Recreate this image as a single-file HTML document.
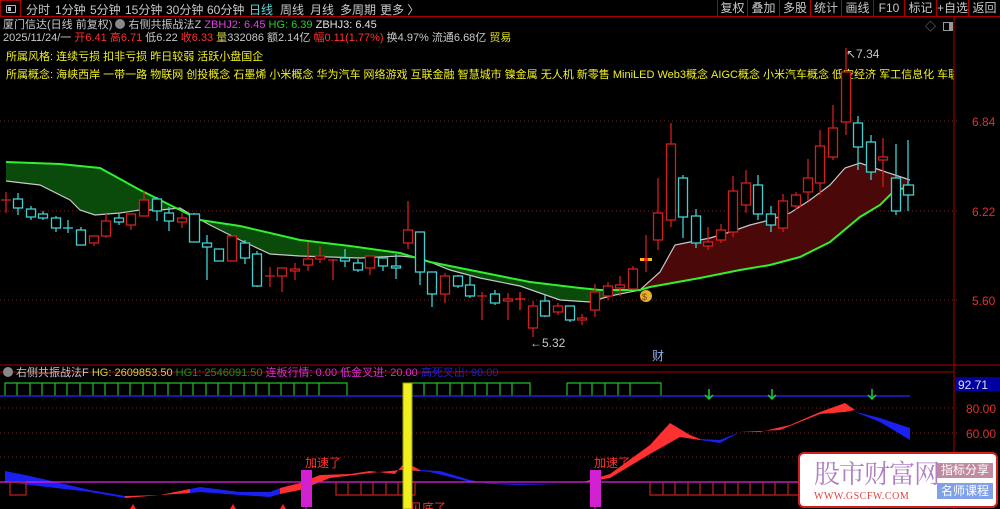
<!DOCTYPE html>
<html><head><meta charset="utf-8">
<style>
*{margin:0;padding:0;box-sizing:border-box}
body{width:1000px;height:509px;background:#000;overflow:hidden;position:relative;font-family:"Liberation Sans","Noto Sans CJK SC",sans-serif;font-size:11px;color:#c8c8c8}
.t{position:absolute;white-space:nowrap;line-height:14px}
.top{position:absolute;left:0;top:0;width:1000px;height:17px;border-bottom:1px solid #a00}
.top span{position:absolute;top:1px;font-size:12px;color:#c8c8c8}
.btn{position:absolute;top:0;height:17px;border-left:1px solid #a00;color:#c8c8c8;font-size:12px;text-align:center;line-height:16px}
</style></head><body>
<div class="top">
<div style="position:absolute;left:0;top:0;width:21px;height:17px;border:1px solid #a00"><div style="position:absolute;left:5px;top:4px;width:10px;height:8px;border:1px solid #bbb;border-radius:1px"><div style="position:absolute;left:1px;top:1px;width:3px;height:4px;background:#bbb"></div></div></div>
<span style="left:26px">分时</span><span style="left:55px">1分钟</span><span style="left:90px">5分钟</span><span style="left:125px">15分钟</span><span style="left:166px">30分钟</span><span style="left:207px">60分钟</span><span style="left:249px;color:#5fd7d7">日线</span><span style="left:280px">周线</span><span style="left:310px">月线</span><span style="left:340px">多周期</span><span style="left:380px">更多 〉</span>
<div class="btn" style="left:717px;width:30px">复权</div><div class="btn" style="left:747px;width:32px">叠加</div><div class="btn" style="left:779px;width:31px">多股</div><div class="btn" style="left:810px;width:31px">统计</div><div class="btn" style="left:841px;width:32px">画线</div><div class="btn" style="left:873px;width:31px">F10</div><div class="btn" style="left:904px;width:32px">标记</div><div class="btn" style="left:936px;width:32px">+自选</div><div class="btn" style="left:968px;width:32px">返回</div>
</div>
<div class="t" style="left:3px;top:18px;font-size:11px">厦门信达(日线 前复权) <span style="display:inline-block;width:10px;height:10px;border-radius:50%;background:#888;vertical-align:-1px"></span> 右侧共振战法Z <span style="color:#e040e0">ZBHJ2: 6.45</span> <span style="color:#20d020">HG: 6.39</span> <span style="color:#e0e0e0">ZBHJ3: 6.45</span></div>
<div class="t" style="left:3px;top:31px;font-size:11px">2025/11/24/一 <span style="color:#ff3030">开6.41 高6.71</span> 低6.22 <span style="color:#ff3030">收6.33</span> <span style="color:#c8c840">量</span>332086 额2.14亿 <span style="color:#ff3030">幅0.11(1.77%)</span> 换4.97% 流通6.68亿 <span style="color:#e0e020">贸易</span></div>
<div class="t" style="left:6px;top:50px;color:#f0f020;font-size:11px">所属风格: 连续亏损 扣非亏损 昨日较弱 活跃小盘国企</div>
<div class="t" style="left:6px;top:68px;color:#f0f020;font-size:11px;width:948px;overflow:hidden">所属概念: 海峡西岸 一带一路 物联网 创投概念 石墨烯 小米概念 华为汽车 网络游戏 互联金融 智慧城市 镍金属 无人机 新零售 MiniLED Web3概念 AIGC概念 小米汽车概念 低空经济 军工信息化 车联网 I</div>
<div class="t" style="left:925px;top:20px;color:#888;font-size:11px">◇</div>
<div style="position:absolute;left:943px;top:22px;width:10px;height:9px;border:1px solid #999"><div style="position:absolute;right:0;top:0;width:3px;height:7px;background:#999"></div></div>

<svg width="1000" height="509" style="position:absolute;left:0;top:0" xmlns="http://www.w3.org/2000/svg">
<line x1="954" y1="17" x2="954" y2="509" stroke="#b00000" stroke-width="1"/>
<g stroke="#802020" stroke-dasharray="1,3">
<line x1="0" y1="121" x2="960" y2="121"/><line x1="0" y1="211" x2="960" y2="211"/><line x1="0" y1="300" x2="960" y2="300"/>
<line x1="0" y1="408" x2="960" y2="408"/><line x1="0" y1="433" x2="960" y2="433"/><line x1="0" y1="457" x2="960" y2="457"/>
</g>
<g fill="#e03030" font-size="12" font-family="Liberation Sans">
<text x="972" y="126">6.84</text><text x="972" y="216">6.22</text><text x="972" y="305">5.60</text>
<text x="966" y="413">80.00</text><text x="966" y="438">60.00</text>
</g>
<rect x="955" y="377" width="45" height="14" fill="#0000a0"/><text x="958" y="389" fill="#e0e0e0" font-size="12" font-family="Liberation Sans">92.71</text>
<polygon fill="#0a4a0a" points="6,162 60,164 100,168 140,190 190,215 200,220 240,226 300,240 350,246 400,253 430,262 480,272 530,282 580,288 600,290 640,290 610,296 590,302 560,300 520,286 480,278 450,270 420,258 400,256 360,258 330,257 300,256 270,254 240,240 210,225 190,214 180,208 160,210 140,210 120,213 95,215 80,210 70,200 40,185 6,181"/>
<polygon fill="#4a0808" points="640,290 650,287 700,278 720,274 740,270 770,265 800,257 830,242 860,217 880,205 895,190 910,187 910,180 895,175 880,170 860,163 845,168 830,185 810,200 790,213 770,220 750,225 730,232 710,238 690,242 675,245 660,272"/>
<polyline fill="none" stroke="#c8c8c8" stroke-width="1.2" points="6,181 40,185 70,200 80,210 95,215 120,213 140,210 160,210 180,208 190,214 210,225 240,240 270,254 300,256 330,257 360,258 400,256 420,258 450,270 480,278 520,286 560,300 590,302 610,296 640,290 660,272 675,245 690,242 710,238 730,232 750,225 770,220 790,213 810,200 830,185 845,168 860,163 880,170 895,175 910,180"/>
<polyline fill="none" stroke="#30f030" stroke-width="2" points="6,162 60,164 100,168 140,190 190,215 200,220 240,226 300,240 350,246 400,253 430,262 480,272 530,282 580,288 600,290 640,290 650,287 700,278 720,274 740,270 770,265 800,257 830,242 860,217 880,205 895,190 910,187"/>
<g stroke-width="1.3" fill="#000">
<g stroke="#d02020"><line x1="6" y1="192" x2="6" y2="213"/><line x1="1" y1="200" x2="11" y2="200"/></g>
<g stroke="#40d0d0"><line x1="18" y1="193" x2="18" y2="215"/><rect x="13.5" y="199" width="9" height="9"/></g>
<g stroke="#40d0d0"><line x1="31" y1="206" x2="31" y2="220"/><rect x="26.5" y="209" width="9" height="8"/></g>
<g stroke="#40d0d0"><line x1="43" y1="211" x2="43" y2="220"/><rect x="38.5" y="214" width="9" height="4"/></g>
<g stroke="#40d0d0"><line x1="56" y1="216" x2="56" y2="232"/><rect x="51.5" y="218" width="9" height="10"/></g>
<g stroke="#40d0d0"><line x1="68" y1="220" x2="68" y2="233"/><line x1="63" y1="228" x2="73" y2="228"/></g>
<g stroke="#40d0d0"><line x1="81" y1="227" x2="81" y2="245"/><rect x="76.5" y="230" width="9" height="15"/></g>
<g stroke="#d02020"><line x1="94" y1="236" x2="94" y2="246"/><rect x="89.5" y="236" width="9" height="7"/></g>
<g stroke="#d02020"><line x1="106" y1="214" x2="106" y2="238"/><rect x="101.5" y="221" width="9" height="15"/></g>
<g stroke="#40d0d0"><line x1="119" y1="213" x2="119" y2="225"/><rect x="114.5" y="218" width="9" height="4"/></g>
<g stroke="#d02020"><line x1="131" y1="214" x2="131" y2="230"/><rect x="126.5" y="214" width="9" height="11"/></g>
<g stroke="#d02020"><line x1="144" y1="191" x2="144" y2="216"/><rect x="139.5" y="200" width="9" height="16"/></g>
<g stroke="#40d0d0"><line x1="157" y1="197" x2="157" y2="221"/><rect x="152.5" y="199" width="9" height="12"/></g>
<g stroke="#40d0d0"><line x1="169" y1="207" x2="169" y2="231"/><rect x="164.5" y="213" width="9" height="8"/></g>
<g stroke="#d02020"><line x1="182" y1="213" x2="182" y2="228"/><rect x="177.5" y="218" width="9" height="4"/></g>
<g stroke="#40d0d0"><line x1="194" y1="213" x2="194" y2="242"/><rect x="189.5" y="214" width="10" height="28"/></g>
<g stroke="#40d0d0"><line x1="207" y1="235" x2="207" y2="280"/><rect x="202.5" y="243" width="9" height="4"/></g>
<g stroke="#40d0d0"><rect x="214.5" y="249" width="9" height="12"/></g>
<g stroke="#d02020"><rect x="227.5" y="236" width="9" height="25"/></g>
<g stroke="#40d0d0"><line x1="245" y1="240" x2="245" y2="264"/><rect x="240.5" y="243" width="9" height="15"/></g>
<g stroke="#40d0d0"><line x1="257" y1="251" x2="257" y2="287"/><rect x="252.5" y="254" width="9" height="32"/></g>
<g stroke="#d02020"><line x1="270" y1="267" x2="270" y2="287"/><line x1="265" y1="276" x2="275" y2="276"/></g>
<g stroke="#d02020"><line x1="282" y1="268" x2="282" y2="292"/><rect x="277.5" y="268" width="9" height="8"/></g>
<g stroke="#d02020"><line x1="295" y1="263" x2="295" y2="280"/><rect x="290.5" y="269" width="9" height="2"/></g>
<g stroke="#d02020"><line x1="308" y1="242" x2="308" y2="271"/><rect x="303.5" y="259" width="9" height="6"/></g>
<g stroke="#d02020"><line x1="320" y1="246" x2="320" y2="263"/><rect x="315.5" y="256" width="9" height="3"/></g>
<g stroke="#d02020"><line x1="333" y1="259" x2="333" y2="280"/><line x1="328" y1="260" x2="338" y2="260"/></g>
<g stroke="#40d0d0"><line x1="345" y1="249" x2="345" y2="267"/><rect x="340.5" y="258" width="9" height="3"/></g>
<g stroke="#40d0d0"><line x1="358" y1="259" x2="358" y2="272"/><rect x="353.5" y="263" width="9" height="7"/></g>
<g stroke="#d02020"><line x1="370" y1="256" x2="370" y2="275"/><rect x="365.5" y="256" width="9" height="12"/></g>
<g stroke="#40d0d0"><line x1="383" y1="258" x2="383" y2="271"/><rect x="378.5" y="258" width="9" height="8"/></g>
<g stroke="#40d0d0"><line x1="396" y1="254" x2="396" y2="279"/><rect x="391.5" y="266" width="9" height="2"/></g>
<g stroke="#d02020"><line x1="408" y1="201" x2="408" y2="249"/><rect x="403.5" y="230" width="9" height="13"/></g>
<g stroke="#40d0d0"><line x1="420" y1="232" x2="420" y2="285"/><rect x="415.5" y="232" width="9" height="40"/></g>
<g stroke="#40d0d0"><line x1="432" y1="272" x2="432" y2="307"/><rect x="427.5" y="272" width="9" height="22"/></g>
<g stroke="#d02020"><line x1="445" y1="273" x2="445" y2="303"/><rect x="440.5" y="276" width="9" height="18"/></g>
<g stroke="#40d0d0"><line x1="458" y1="275" x2="458" y2="288"/><rect x="453.5" y="276" width="9" height="10"/></g>
<g stroke="#40d0d0"><line x1="470" y1="275" x2="470" y2="298"/><rect x="465.5" y="285" width="9" height="11"/></g>
<g stroke="#d02020"><line x1="482" y1="292" x2="482" y2="320"/><line x1="477" y1="296" x2="487" y2="296"/></g>
<g stroke="#40d0d0"><line x1="495" y1="290" x2="495" y2="305"/><rect x="490.5" y="294" width="9" height="9"/></g>
<g stroke="#d02020"><line x1="508" y1="293" x2="508" y2="320"/><rect x="503.5" y="299" width="9" height="2"/></g>
<g stroke="#ff2020"><line x1="520" y1="292" x2="520" y2="310"/><line x1="515" y1="299" x2="525" y2="299"/></g>
<g stroke="#d02020"><line x1="533" y1="301" x2="533" y2="337"/><rect x="528.5" y="306" width="9" height="22"/></g>
<g stroke="#40d0d0"><line x1="545" y1="295" x2="545" y2="317"/><rect x="540.5" y="301" width="9" height="15"/></g>
<g stroke="#d02020"><line x1="558" y1="303" x2="558" y2="315"/><rect x="553.5" y="306" width="9" height="6"/></g>
<g stroke="#40d0d0"><line x1="570" y1="306" x2="570" y2="322"/><rect x="565.5" y="306" width="9" height="14"/></g>
<g stroke="#d02020"><line x1="582" y1="314" x2="582" y2="325"/><rect x="577.5" y="318" width="9" height="2"/></g>
<g stroke="#d02020"><line x1="595" y1="284" x2="595" y2="317"/><rect x="590.5" y="292" width="9" height="18"/></g>
<g stroke="#d02020"><line x1="608" y1="282" x2="608" y2="300"/><rect x="603.5" y="286" width="9" height="10"/></g>
<g stroke="#d02020"><line x1="620" y1="276" x2="620" y2="296"/><rect x="615.5" y="285" width="9" height="3"/></g>
<g stroke="#d02020"><line x1="633" y1="266" x2="633" y2="290"/><rect x="628.5" y="269" width="9" height="20"/></g>
<g stroke="#d02020"><line x1="646" y1="235" x2="646" y2="272"/></g><rect x="640" y="258" width="12" height="3" fill="#f0c020"/><rect x="644" y="258" width="4" height="3" fill="#ff2020"/>
<g stroke="#d02020"><line x1="658" y1="178" x2="658" y2="250"/><rect x="653.5" y="213" width="9" height="27"/></g>
<g stroke="#d02020"><line x1="671" y1="123" x2="671" y2="227"/><rect x="666.5" y="144" width="9" height="76"/></g>
<g stroke="#40d0d0"><line x1="683" y1="175" x2="683" y2="238"/><rect x="678.5" y="178" width="9" height="39"/></g>
<g stroke="#40d0d0"><line x1="696" y1="209" x2="696" y2="248"/><rect x="691.5" y="216" width="9" height="27"/></g>
<g stroke="#d02020"><line x1="708" y1="227" x2="708" y2="250"/><rect x="703.5" y="242" width="9" height="4"/></g>
<g stroke="#d02020"><line x1="721" y1="224" x2="721" y2="243"/><rect x="716.5" y="230" width="9" height="10"/></g>
<g stroke="#d02020"><line x1="733" y1="176" x2="733" y2="237"/><rect x="728.5" y="191" width="9" height="41"/></g>
<g stroke="#d02020"><line x1="746" y1="170" x2="746" y2="213"/><rect x="741.5" y="183" width="9" height="22"/></g>
<g stroke="#40d0d0"><line x1="758" y1="175" x2="758" y2="220"/><rect x="753.5" y="185" width="9" height="29"/></g>
<g stroke="#40d0d0"><line x1="771" y1="206" x2="771" y2="232"/><rect x="766.5" y="214" width="9" height="11"/></g>
<g stroke="#d02020"><line x1="783" y1="194" x2="783" y2="232"/><rect x="778.5" y="201" width="9" height="27"/></g>
<g stroke="#d02020"><line x1="796" y1="192" x2="796" y2="210"/><rect x="791.5" y="195" width="9" height="11"/></g>
<g stroke="#d02020"><line x1="808" y1="159" x2="808" y2="201"/><rect x="803.5" y="178" width="9" height="14"/></g>
<g stroke="#d02020"><line x1="820" y1="130" x2="820" y2="195"/><rect x="815.5" y="146" width="9" height="37"/></g>
<g stroke="#d02020"><line x1="833" y1="105" x2="833" y2="160"/><rect x="828.5" y="128" width="9" height="29"/></g>
<g stroke="#d02020"><line x1="846" y1="48" x2="846" y2="135"/><rect x="841.5" y="72" width="9" height="50"/></g>
<g stroke="#40d0d0"><line x1="858" y1="116" x2="858" y2="170"/><rect x="853.5" y="123" width="9" height="24"/></g>
<g stroke="#40d0d0"><line x1="871" y1="135" x2="871" y2="180"/><rect x="866.5" y="142" width="9" height="30"/></g>
<g stroke="#d02020"><line x1="883" y1="138" x2="883" y2="187"/><rect x="878.5" y="157" width="9" height="3"/></g>
<g stroke="#40d0d0"><line x1="896" y1="144" x2="896" y2="215"/><rect x="891.5" y="178" width="9" height="33"/></g>
<g stroke="#40d0d0"><line x1="908" y1="140" x2="908" y2="211"/><rect x="903.5" y="185" width="10" height="10"/></g>
</g>
<circle cx="646" cy="296" r="6" fill="#e8b030"/><text x="642" y="300" font-size="9" fill="#804000">$</text>
<g fill="#c8c8c8" font-size="12" font-family="Liberation Sans"><text x="530" y="347">←5.32</text><text x="846" y="58">↖7.34</text></g>
<text x="652" y="360" fill="#90b0f0" font-size="12">财</text>
<line x1="0" y1="365" x2="1000" y2="365" stroke="#a00"/>
<line x1="0" y1="372" x2="954" y2="372" stroke="#a00"/>
<g fill="none" stroke="#20c020" stroke-width="1.2">
<polyline points="5,396 5,383 347,383 347,396"/>
<polyline points="412,396 412,383 530,383 530,396"/>
<polyline points="567,396 567,383 661,383 661,396"/>
</g>
<path stroke="#20c020" stroke-width="1.2" d="M17 383v13M30 383v13M42 383v13M55 383v13M67 383v13M80 383v13M93 383v13M105 383v13M118 383v13M130 383v13M143 383v13M155 383v13M168 383v13M181 383v13M193 383v13M206 383v13M218 383v13M231 383v13M244 383v13M256 383v13M269 383v13M281 383v13M294 383v13M307 383v13M319 383v13M424 383v13M437 383v13M450 383v13M462 383v13M475 383v13M487 383v13M500 383v13M512 383v13M580 383v13M592 383v13M605 383v13M618 383v13M630 383v13"/>
<line x1="0" y1="396" x2="910" y2="396" stroke="#2020e0" stroke-width="1.5"/>
<g stroke="#20d020" stroke-width="1.5" fill="none"><path d="M709 389v10M705 395l4 4 4-4M772 389v10M768 395l4 4 4-4M872 389v10M868 395l4 4 4-4"/></g>
<polygon fill="#1a20f0" points="5,471 30,476 90,490 125,496 125,498 90,492 5,482"/>
<polygon fill="#ff3030" points="125,496 160,495 190,489 190,493 160,495 125,498"/>
<polygon fill="#1a20f0" points="190,489 200,487 240,492 270,492 280,488 280,494 270,497 240,495 200,492 190,493"/>
<polygon fill="#ff3030" points="280,488 300,483 320,475 350,474 370,471 395,474 405,462 420,470 420,471 400,470 370,473 330,478 300,490 280,494"/>
<polygon fill="#1a20f0" points="420,470 440,471 470,480 490,484 518,485 560,484 560,484 518,484 470,482 430,472 420,471"/>
<polygon fill="#ff3030" points="560,484 580,483 610,474 650,445 670,423 690,435 700,439 700,440 680,437 650,454 610,478 580,483 560,484"/>
<polygon fill="#1a20f0" points="700,439 720,440 740,432 740,432 720,443 700,440"/>
<polygon fill="#ff3030" points="740,432 760,432 790,425 820,412 845,403 855,410 845,412 820,414 780,430 740,432"/>
<polygon fill="#1a20f0" points="845,410 860,413 880,418 910,428 910,440 880,422 855,412"/>
<line x1="0" y1="482" x2="954" y2="482" stroke="#e020e0" stroke-width="1.3"/>
<g fill="none" stroke="#c02020" stroke-width="1.2">
<rect x="10" y="482" width="16" height="13"/>
<path d="M336 482v13h79v-13M348 482v13M361 482v13M373 482v13M386 482v13M398 482v13"/>
<path d="M650 482v13h150M663 482v13M675 482v13M688 482v13M700 482v13M713 482v13M725 482v13M738 482v13M750 482v13M763 482v13M775 482v13M788 482v13"/>
</g>
<g fill="#ff2020"><path d="M130 509l3-5 3 5zM230 509l3-5 3 5zM280 509l3-5 3 5z"/></g>
<rect x="403" y="383" width="9" height="126" fill="#f0f020" stroke="#a0a000"/>
<rect x="301" y="470" width="11" height="37" fill="#d020d0"/>
<rect x="590" y="470" width="11" height="37" fill="#d020d0"/>
<line x1="306" y1="507" x2="306" y2="509" stroke="#d020d0"/><line x1="595" y1="507" x2="595" y2="509" stroke="#d020d0"/>
<g fill="#ff3030" font-size="12" font-family="Liberation Sans,Noto Sans CJK SC"><text x="305" y="467">加速了</text><text x="594" y="467">加速了</text><text x="410" y="512">见底了</text></g>
</svg>
<div class="t" style="left:3px;top:366px;font-size:11px"><span style="display:inline-block;width:10px;height:10px;border-radius:50%;background:#888;vertical-align:-1px"></span> 右侧共振战法F <span style="color:#d0d040">HG: 2609853.50</span> <span style="color:#209020">HG1: 2546091.50</span> <span style="color:#d030d0">连板行情: 0.00 低金叉进: 20.00</span> <span style="color:#2020d0">高死叉出: 90.00</span></div>
<div style="position:absolute;left:798px;top:452px;width:200px;height:56px;background:#fff;border:2px solid #d02020;border-radius:6px">
<div class="t" style="left:14px;top:4px;font-size:26px;line-height:30px;color:#b080c0;font-family:'Noto Serif CJK SC','Noto Sans CJK SC',serif;letter-spacing:-1px">股市财富网</div>
<div class="t" style="left:14px;top:36px;font-size:10px;color:#e04040;font-family:'Liberation Serif',serif;letter-spacing:0.5px">WWW.GSCFW.COM</div>
<div class="t" style="left:137px;top:9px;width:56px;height:15px;background:#c08aa0;color:#fff;font-size:12px;text-align:center;line-height:15px">指标分享</div>
<div class="t" style="left:137px;top:29px;width:56px;height:16px;background:#80a0e8;color:#fff;font-size:12px;text-align:center;line-height:16px">名师课程</div>
</div>
</body></html>
